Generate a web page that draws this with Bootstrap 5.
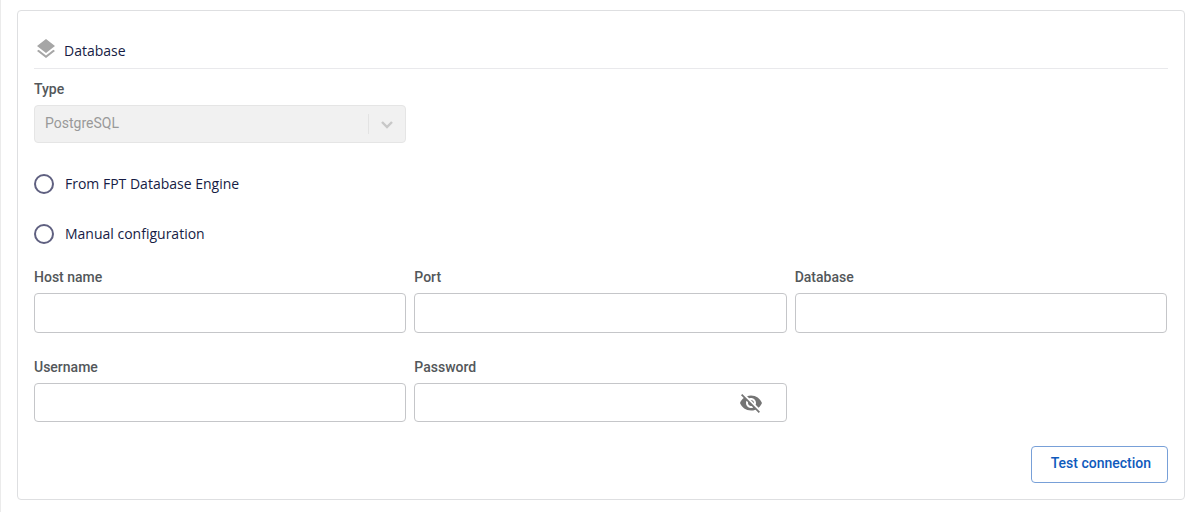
<!DOCTYPE html>
<html lang="en">
<head>
<meta charset="utf-8">
<meta name="viewport" content="width=device-width, initial-scale=1">
<title>Database</title>
<link href="https://cdn.jsdelivr.net/npm/bootstrap@5.3.0/dist/css/bootstrap.min.css" rel="stylesheet">
<style>
  body { font-family: Roboto, "Liberation Sans", sans-serif; font-size: 14px; line-height: 20px; color: #53575a; background: #fff; }
  .page { border-left: 1px solid #ebebeb; min-height: 100vh; padding: 10px 10px 12px 16px; }
  .panel { border-color: #dedfe1; border-radius: 4px; --bs-card-spacer-y: 16px; }
  .section-head { border-bottom: 1px solid #e9e9ec; padding: 11px 0 7px 1px; margin-bottom: 10px; gap: 7px; }
  .section-head h2, .choice label { font: 400 14px/20px "Open Sans", "Noto Sans", sans-serif; color: #161c45; }
  .section-head h2 { padding-top: 3px; }
  .field-label { font-weight: 500; margin-bottom: 6px; display: block; }
  .form-control, .form-select { font-size: 14px; line-height: 20px; border-color: #c5c6c9; border-radius: 4px; height: 40px; }
  .form-select:disabled { height: 38px; padding: 7px 40px 9px 10px; background: #f1f1f1; border-color: #e5e5e5; color: #999; opacity: 1; }
  .select-arrow { right: 0; top: 0; pointer-events: none; }
  .choices { gap: 30px; margin: 31px 0 23px; }
  .choice { gap: 11px; }
  .choice .form-check-input { width: 20px; height: 20px; margin: 0; border: 2px solid #5f6080; }
  .row { --bs-gutter-x: 8px; --bs-gutter-y: 24px; margin-right: -3px; }
  .short-field { height: 39px; }
  .eye { right: 24px; top: 8px; line-height: 0; }
  .test-btn { --bs-btn-color: #0f5abc; --bs-btn-border-color: #78a0d8; --bs-btn-hover-bg: #0f5abc; font-size: 14px; line-height: 20px; font-weight: 500; padding: 6px 16px 9px 19px; border-radius: 4px; }
</style>
</head>
<body>
<main class="page">
  <form class="card panel">
    <div class="card-body">
      <div class="section-head d-flex align-items-start">
        <svg width="22" height="22" viewBox="1 1 22 22" fill="#a6a6a6" aria-hidden="true"><path d="M12 18.54l-7.37-5.73L3 14.07l9 7 9-7-1.63-1.27z"/><path d="M12 16l7.36-5.73L21 9l-9-7-9 7 1.63 1.27z"/></svg>
        <h2 class="mb-0">Database</h2>
      </div>

      <div class="row">
        <div class="col-4">
          <label class="field-label" for="type">Type</label>
          <div class="position-relative">
            <select class="form-select" id="type" disabled><option>PostgreSQL</option></select>
            <svg class="select-arrow position-absolute" width="38" height="38" aria-hidden="true"><path d="M.5 9v20" stroke="#e3e3e3"/><path d="M14 17l5 5 5-5" fill="none" stroke="#c8c8c8" stroke-width="2.4"/></svg>
          </div>
        </div>
      </div>

      <div class="choices d-flex flex-column">
        <div class="choice d-flex align-items-center">
          <input class="form-check-input" type="radio" name="source" id="engine">
          <label for="engine">From FPT Database Engine</label>
        </div>
        <div class="choice d-flex align-items-center">
          <input class="form-check-input" type="radio" name="source" id="manual">
          <label for="manual">Manual configuration</label>
        </div>
      </div>

      <div class="row">
        <div class="col-4">
          <label class="field-label" for="host">Host name</label>
          <input class="form-control" type="text" id="host">
        </div>
        <div class="col-4">
          <label class="field-label" for="port">Port</label>
          <input class="form-control" type="text" id="port">
        </div>
        <div class="col-4">
          <label class="field-label" for="database">Database</label>
          <input class="form-control" type="text" id="database">
        </div>
        <div class="col-4">
          <label class="field-label" for="username">Username</label>
          <input class="form-control short-field" type="text" id="username">
        </div>
        <div class="col-4">
          <label class="field-label" for="password">Password</label>
          <div class="position-relative">
            <input class="form-control short-field pe-5" type="password" id="password">
            <button class="eye btn p-0 border-0 position-absolute" type="button" aria-label="Show password">
              <svg width="24" height="24" viewBox="0 0 24 24" fill="#757575"><path d="M12 7c2.76 0 5 2.24 5 5 0 .65-.13 1.26-.36 1.83l2.92 2.92c1.51-1.26 2.7-2.89 3.43-4.75-1.73-4.39-6-7.5-11-7.5-1.4 0-2.74.25-3.98.7l2.16 2.16C10.74 7.13 11.35 7 12 7zM2 4.27l2.28 2.28.46.46C3.08 8.3 1.78 10.02 1 12c1.73 4.39 6 7.5 11 7.5 1.55 0 3.03-.3 4.38-.84l.42.42L19.73 22 21 20.73 3.27 3 2 4.27zM7.53 9.8l1.55 1.55c-.05.21-.08.43-.08.65 0 1.66 1.34 3 3 3 .22 0 .44-.03.65-.08l1.55 1.55c-.67.33-1.41.53-2.2.53-2.76 0-5-2.24-5-5 0-.79.2-1.53.53-2.2zm4.31-.78l3.15 3.15.02-.16c0-1.66-1.34-3-3-3l-.17.01z"/></svg>
            </button>
          </div>
        </div>
      </div>

      <div class="d-flex justify-content-end mt-4">
        <button class="btn btn-outline-primary test-btn" type="button">Test connection</button>
      </div>
    </div>
  </form>
</main>
<script src="https://cdn.jsdelivr.net/npm/bootstrap@5.3.0/dist/js/bootstrap.bundle.min.js"></script>
</body>
</html>
